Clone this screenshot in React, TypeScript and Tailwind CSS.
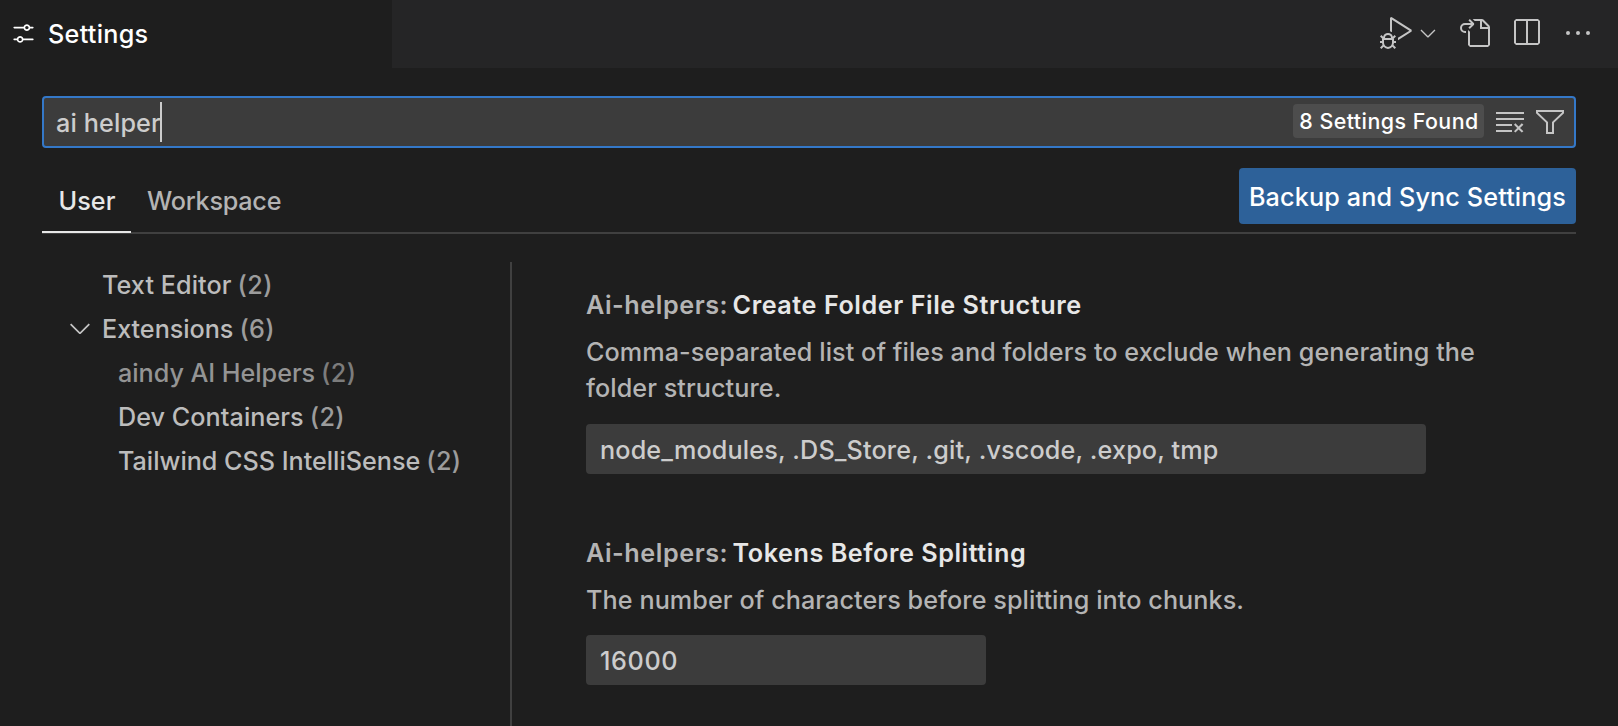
import type { ReactNode } from "react";
import {
  VscSettings,
  VscDebugAlt,
  VscChevronDown,
  VscGoToFile,
  VscSplitHorizontal,
  VscEllipsis,
  VscClearAll,
  VscFilter,
} from "react-icons/vsc";

function TitleBar() {
  return (
    <header className="flex h-[68px] shrink-0 bg-[#252526]">
      <div className="flex w-[392px] items-center bg-[#1e1e1e] pb-0.5 pl-[9.5px] text-white">
        <VscSettings className="size-[27px]" />
        <span className="ml-[11.5px] pt-0.5 font-medium tracking-[0.28px]">Settings</span>
      </div>
      <div className="ml-auto flex items-start pt-[17px] pr-6 text-[#c5c5c5]">
        <VscDebugAlt className="size-8" />
        <VscChevronDown className="mt-1 ml-1 size-6" />
        <VscGoToFile className="ml-[18px] size-8" />
        <VscSplitHorizontal className="ml-5 size-8" />
        <VscEllipsis className="ml-5 size-8" />
      </div>
    </header>
  );
}

function SearchBox() {
  return (
    <div className="flex h-[52px] items-center rounded-[4px] border-2 border-[#3478c8] bg-[#3c3c3c] pr-2 pl-3">
      <span className="pt-0.5 tracking-[0.12px] text-[#cccccc]">ai helper</span>
      <span className="-ml-px h-10 w-0.5 bg-[#cccccc]" />
      <span className="mr-2.5 mb-0.5 ml-auto flex h-[34px] w-[191px] items-center justify-center rounded-[4px] bg-[#4d4d4d] pl-px text-[21.4px] tracking-[0.46px] whitespace-nowrap text-white">
        8 Settings Found
      </span>
      <VscClearAll className="mr-2 size-8 text-[#c5c5c5]" />
      <VscFilter className="size-8 text-[#c5c5c5]" />
    </div>
  );
}

function ScopeTabs() {
  return (
    <div className="mt-5 flex h-[66px] items-start border-b-2 border-[#404040]">
      <div className="mt-[7px] flex h-[58px] w-[89px] justify-center border-b-2 border-[#e7e7e7] pt-2 pl-px tracking-[0.1px] text-[#e7e7e7]">
        User
      </div>
      <div className="mt-[15px] ml-4 tracking-[-0.25px] text-[#b4b4b4]">Workspace</div>
      <button className="ml-auto flex h-14 w-[337px] items-center justify-center rounded-[4px] bg-[#2d6199] pt-0.5 tracking-[0.13px] whitespace-nowrap text-white">
        Backup and Sync Settings
      </button>
    </div>
  );
}

function TreeRow({ label, count, className }: { label: string; count: number; className: string }) {
  return (
    <div className={`flex h-11 items-center whitespace-nowrap ${className}`}>
      <span>{label}</span>
      <span className="ml-1.5 tracking-[0.4px] opacity-80">({count})</span>
    </div>
  );
}

function Sidebar() {
  return (
    <nav className="flex w-[468px] flex-col pt-px">
      <TreeRow label="Text Editor" count={2} className="pl-[60px] tracking-[0.06px] text-[#bcbcbc]" />
      <div className="flex items-center">
        <VscChevronDown className="mb-0.5 ml-[22px] size-8 text-[#c5c5c5]" />
        <TreeRow label="Extensions" count={6} className="pl-1.5 tracking-[-0.04px] text-[#bcbcbc]" />
      </div>
      <TreeRow label="aindy AI Helpers" count={2} className="pl-[76px] tracking-[-0.04px] text-[#949494]" />
      <TreeRow label="Dev Containers" count={2} className="pl-[76px] tracking-[0.04px] text-[#bcbcbc]" />
      <TreeRow label="Tailwind CSS IntelliSense" count={2} className="pl-[76px] tracking-[-0.02px] text-[#bcbcbc]" />
    </nav>
  );
}

function Heading({ title }: { title: string }) {
  return (
    <h2 className="font-[640] tracking-[0.55px] whitespace-nowrap text-[#b4b4b4]">
      Ai-helpers: <span className="-ml-[2.5px] text-[#e7e7e7]">{title}</span>
    </h2>
  );
}

function Field({ className, children }: { className: string; children: ReactNode }) {
  return (
    <div className={`flex h-[50px] items-center rounded-[4px] bg-[#3c3c3c] pt-0.5 pl-3.5 text-[#cccccc] ${className}`}>
      {children}
    </div>
  );
}

export default function App() {
  return (
    <div className="flex h-[726px] w-full flex-col overflow-hidden bg-[#1e1e1e] font-['Inter',sans-serif] text-[25.2px] leading-[36px] font-[450]">
      <TitleBar />
      <div className="flex min-h-0 flex-1 flex-col pt-7 pr-[42px] pl-[42px]">
        <SearchBox />
        <ScopeTabs />
        <div className="mt-7 flex min-h-0 flex-1">
          <Sidebar />
          <main className="flex-1 border-l-2 border-[#404040] pt-[25px] pl-[74px]">
            <section>
              <Heading title="Create Folder File Structure" />
              <p className="mt-[11px] w-[900px] tracking-[0.065px] text-[#b4b4b4]">
                Comma-separated list of files and folders to exclude when generating the folder structure.
              </p>
              <Field className="mt-[18px] w-[840px] tracking-[0.14px]">
                node_modules, .DS_Store, .git, .vscode, .expo, tmp
              </Field>
            </section>
            <section className="mt-[61px]">
              <Heading title="Tokens Before Splitting" />
              <p className="mt-[11px] tracking-[0.075px] text-[#b4b4b4]">
                The number of characters before splitting into chunks.
              </p>
              <Field className="mt-[17px] w-[400px] tracking-[0.6px]">16000</Field>
            </section>
          </main>
        </div>
      </div>
    </div>
  );
}
